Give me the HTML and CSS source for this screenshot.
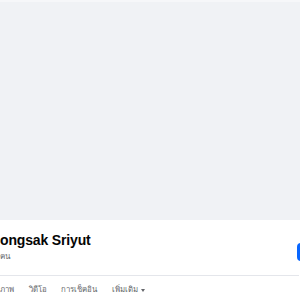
FILE: index.html
```html
<!DOCTYPE html>
<html lang="th">
<head>
<meta charset="utf-8">
<link rel="stylesheet" href="styles.css">
</head>
<body>
<div class="page">
  <div class="cover"></div>
  <div class="profile">
    <div class="head">
      <div class="info">
        <h1 class="name">ongsak Sriyut</h1>
        <div class="meta">คน</div>
      </div>
      <button class="action" type="button"></button>
    </div>
    <div class="divider"></div>
    <nav class="tabs">
      <span class="tab tab-first">ภาพ</span>
      <span class="tab">วิดีโอ</span>
      <span class="tab">การเช็คอิน</span>
      <span class="tab">เพิ่มเติม <span class="caret"></span></span>
    </nav>
  </div>
</div>
</body>
</html>
```

FILE: styles.css
```css
html, body {
  margin: 0;
  padding: 0;
  background: #ffffff;
  overflow: hidden;
}
.page {
  width: 300px;
  height: 300px;
  overflow: hidden;
  font-family: "Liberation Sans", "Noto Sans", Arial, sans-serif;
}
.cover {
  height: 218px;
  border-top: 2px solid #f6f7f9;
  background: #f0f2f5;
}
.profile {
  background: #ffffff;
}
.head {
  display: flex;
  justify-content: space-between;
  align-items: flex-start;
  padding-top: 11px;
  height: 44px;
}
.info {
  display: flex;
  flex-direction: column;
}
.name {
  margin: 0;
  font-size: 14px;
  line-height: 18px;
  font-weight: 700;
  color: #050505;
  letter-spacing: -0.15px;
}
.meta {
  margin-top: 3px;
  font-size: 8px;
  line-height: 10px;
  color: #65676b;
}
.action {
  margin-top: 12px;
  width: 40px;
  height: 18px;
  margin-right: -37px;
  border: 0;
  padding: 0;
  border-radius: 4px;
  background: #0866ff;
}
.divider {
  height: 1px;
  background: #e4e6eb;
  margin-right: 1px;
}
.tabs {
  display: flex;
  gap: 14.5px;
  padding-top: 8px;
  font-size: 7.8px;
  line-height: 12px;
  color: #65676b;
}
.tab {
  display: inline-flex;
  align-items: center;
  gap: 3px;
  white-space: nowrap;
}
.caret {
  width: 0;
  height: 0;
  border-left: 2.5px solid transparent;
  border-right: 2.5px solid transparent;
  border-top: 3px solid #65676b;
}
```
